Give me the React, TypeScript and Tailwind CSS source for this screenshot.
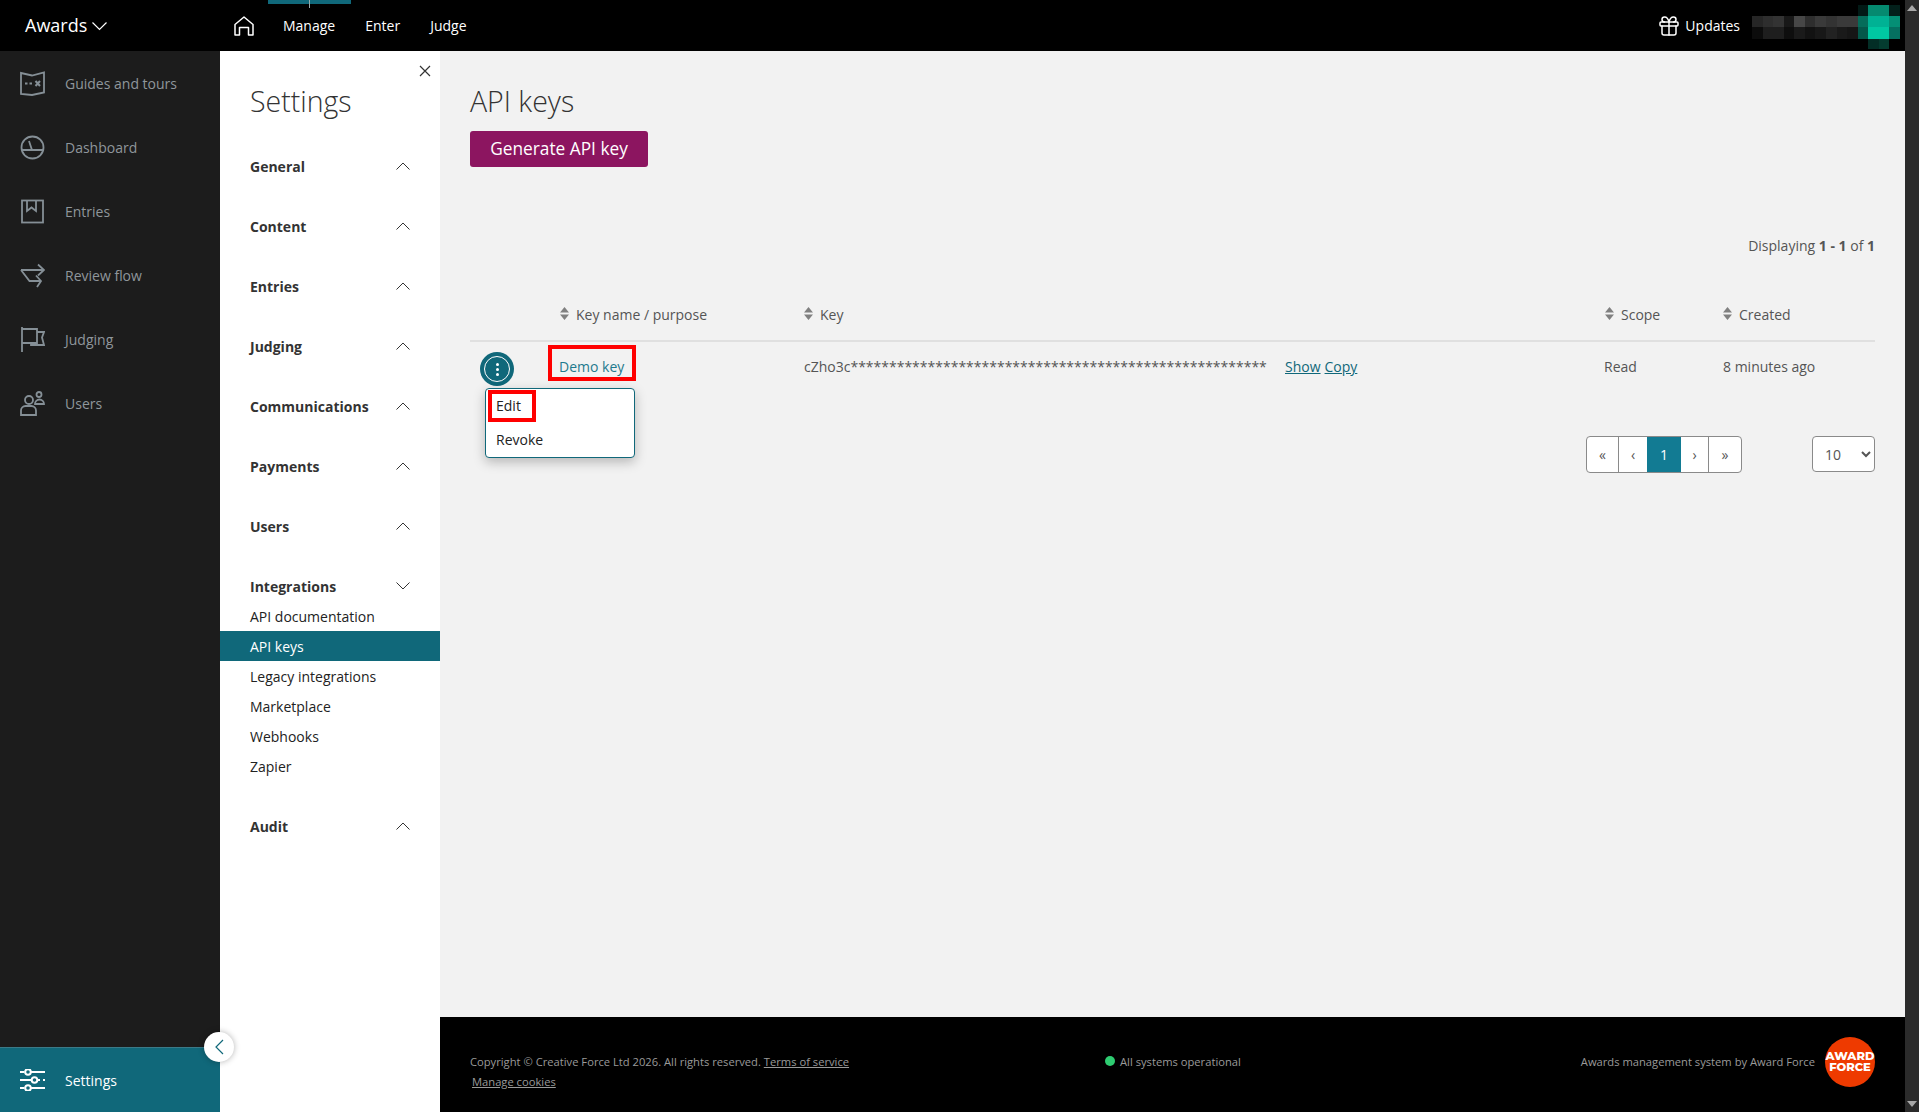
import { Gift } from 'lucide-react';

const sideLinks = [
	{ label: 'Guides and tours', icon: 'guides' },
	{ label: 'Dashboard', icon: 'dashboard' },
	{ label: 'Entries', icon: 'entries' },
	{ label: 'Review flow', icon: 'review' },
	{ label: 'Judging', icon: 'judging' },
	{ label: 'Users', icon: 'users' },
];

const settingsBefore = ['General', 'Content', 'Entries', 'Judging', 'Communications', 'Payments', 'Users'];
const integrationLinks = ['API documentation', 'API keys', 'Legacy integrations', 'Marketplace', 'Webhooks', 'Zapier'];

// blurred account name in the top bar: [x, y, w, h, colour]
const mosaic: [number, number, number, number, string][] = [
	[106, 0, 10, 11, '#021a16'], [116, 0, 11, 11, '#058a70'], [127, 0, 10, 11, '#058a70'], [137, 0, 11, 11, '#03201b'],
	[0, 11, 11, 11, '#262626'], [11, 11, 10, 11, '#2e2e2e'], [21, 11, 11, 11, '#333333'],
	[32, 11, 10, 11, '#181818'], [42, 11, 11, 11, '#474747'], [53, 11, 10, 11, '#2e2e2e'], [63, 11, 11, 11, '#3a3a3a'],
	[74, 11, 11, 11, '#333333'], [85, 11, 10, 11, '#3a3a3a'], [95, 11, 11, 11, '#3a3a3a'],
	[106, 11, 10, 11, '#056d5a'], [116, 11, 11, 11, '#00b294'], [127, 11, 10, 11, '#00b294'], [137, 11, 11, 11, '#058f75'],
	[0, 22, 11, 12, '#0c0c0c'], [11, 22, 10, 12, '#1e1e1e'], [21, 22, 11, 12, '#1e1e1e'], [32, 22, 10, 12, '#0e0e0e'],
	[42, 22, 11, 12, '#1a1a1a'], [53, 22, 10, 12, '#121212'], [63, 22, 11, 12, '#181818'], [74, 22, 11, 12, '#222222'],
	[85, 22, 10, 12, '#1a1a1a'], [95, 22, 11, 12, '#161616'],
	[106, 22, 10, 12, '#04584a'], [116, 22, 11, 12, '#00c8a2'], [127, 22, 10, 12, '#00c8a2'], [137, 22, 11, 12, '#057060'],
	[116, 34, 11, 10, '#032e26'], [127, 34, 10, 10, '#043c30'],
];

function SideIcon({ name }: { name: string }) {
	return (
		<svg viewBox="0 0 25 25" fill="none" stroke="#858f96" strokeWidth="1.800" className="w-[25px] h-[25px] shrink-0">
			{name === 'guides' && (
				<>
					<path d="M1 2l11 2.500L24 1.500v20L12 24 1 23z" />
					<path d="M5 12.500h2.500M9.500 12.500H12" />
					<path d="M15.500 10l4.500 5m0-5l-4.500 5" strokeWidth="2" />
				</>
			)}
			{name === 'dashboard' && (
				<>
					<circle cx="12.500" cy="12.500" r="11" />
					<path d="M9 6l3 9h12M2 15h10" />
				</>
			)}
			{name === 'entries' && (
				<>
					<rect x="2" y="1.500" width="21" height="22" />
					<path d="M7 1.500V12l4.500-3.500L16 12V1.500" />
				</>
			)}
			{name === 'review' && (
				<>
					<path d="M1 7h23M18 1.500L24 7l-6 5.500" />
					<path d="M1 7l8.500 11H21M16 12.500l5 5.500-4 6" />
				</>
			)}
			{name === 'judging' && (
				<>
					<path d="M2 0v25" />
					<path d="M2 2h15v14H2" />
					<path d="M17 5h7l-2 5.500 2 7.500H11v-2" />
				</>
			)}
			{name === 'users' && (
				<>
					<circle cx="9" cy="9" r="4" />
					<path d="M1 24v-4.500A4.500 4.500 0 0 1 5.500 15h6a4.500 4.500 0 0 1 4.500 4.500V24z" />
					<circle cx="19" cy="3.500" r="2.500" />
					<path d="M15 13a4.500 4.500 0 0 1 9 0z" />
				</>
			)}
		</svg>
	);
}

function Chevron({ up = true }: { up?: boolean }) {
	return (
		<svg viewBox="0 0 14 8" fill="none" stroke="#333" strokeWidth="1" className="w-[14px] h-[8px]">
			<path d={up ? 'M0.500 7.500L7 1l6.500 6.500' : 'M0.500 0.500L7 7l6.500-6.500'} />
		</svg>
	);
}

function SortCarets() {
	return (
		<svg viewBox="0 0 9 13" fill="#808080" className="w-[9px] h-[13px] shrink-0 mb-[3px]">
			<path d="M4.500 0L9 5.500H0zM0 7.500h9L4.500 13z" />
		</svg>
	);
}

function SettingsHeading({ label, up = true }: { label: string; up?: boolean }) {
	return (
		<div className="h-[30px] pl-[30px] pr-[30px] flex items-center justify-between">
			<span className="text-[14px] font-bold text-[#333]">{label}</span>
			<Chevron up={up} />
		</div>
	);
}

function TopNav() {
	return (
		<header className="relative h-[51px] shrink-0 bg-black flex items-center text-white">
			<div className="absolute left-[268px] top-0 w-[83px] h-[4px] bg-[#10687a]" />
			<div className="absolute left-[309px] top-0 w-px h-[8px] bg-[#9aa]" />
			<div className="w-[220px] pl-[25px] flex items-center gap-[5px]">
				<span className="text-[18px]">Awards</span>
				<svg viewBox="0 0 15 9" fill="none" stroke="#fff" strokeWidth="1.200" className="w-[15px] h-[9px] mt-[2px]">
					<path d="M0.500 0.500L7.500 7.500l7-7" />
				</svg>
			</div>
			<svg viewBox="0 0 20 20" fill="none" stroke="#fff" strokeWidth="1.500" className="w-[20px] h-[20px] ml-[14px]">
				<path d="M1 19V8.500L10 1l9 7.500V19h-4.500v-7.500h-9V19z" strokeLinejoin="round" />
			</svg>
			<nav className="flex items-center gap-[30px] ml-[29px] text-[14px]">
				<span>Manage</span>
				<span>Enter</span>
				<span>Judge</span>
			</nav>
			<div className="ml-auto flex items-center text-[14px]">
				<Gift className="w-[24px] h-[24px]" strokeWidth={1.500} />
				<span className="ml-[4px]">Updates</span>
				<svg width="148" height="44" className="ml-[12px] mr-[5px] mt-[3px]">
					{mosaic.map(([x, y, w, h, c], i) => (
						<rect key={i} x={x} y={y} width={w} height={h} fill={c} />
					))}
				</svg>
			</div>
		</header>
	);
}

function Sidebar() {
	return (
		<aside className="relative z-10 w-[220px] shrink-0 bg-[#1c1c1c] flex flex-col">
			<div className="flex-1">
				{sideLinks.map((l) => (
					<div key={l.label} className="h-[64px] pl-[20px] flex items-center gap-[20px] text-[14px] text-[#8f969b]">
						<SideIcon name={l.icon} />
						<span>{l.label}</span>
					</div>
				))}
			</div>
			<div className="h-[65px] bg-[#10687a] border-t border-[#3b7a88] pl-[20px] flex items-center gap-[20px] text-[14px] text-white">
				<svg viewBox="0 0 25 22" fill="none" stroke="#fff" strokeWidth="2" className="w-[25px] h-[22px] shrink-0">
					<path d="M0 3h4.500M11 3h14M0 11h11M17.500 11H20M23 11h2M0 19h4.500M11 19h14" />
					<circle cx="8" cy="3" r="2.800" />
					<circle cx="14.500" cy="11" r="2.800" />
					<circle cx="8" cy="19" r="2.800" />
				</svg>
				<span>Settings</span>
			</div>
			<button className="absolute left-[204px] bottom-[50px] w-[30px] h-[30px] rounded-full bg-white shadow-[0_0_6px_rgba(0,0,0,0.3)] flex items-center justify-center">
				<svg viewBox="0 0 9 16" fill="none" stroke="#10687a" strokeWidth="1.200" className="w-[9px] h-[16px]">
					<path d="M8 1L1 8l7 7" />
				</svg>
			</button>
		</aside>
	);
}

function SettingsPanel() {
	return (
		<div className="relative w-[220px] shrink-0 bg-white">
			<svg viewBox="0 0 12 12" fill="none" stroke="#333" strokeWidth="1.200" className="absolute left-[199px] top-[14px] w-[12px] h-[12px]">
				<path d="M1 1l10 10M11 1L1 11" />
			</svg>
			<h2 className="pl-[30px] pt-[29px] h-[100px] text-[28.500px] leading-[42px] font-light text-[#333]">Settings</h2>
			<div className="flex flex-col gap-[30px]">
				{settingsBefore.map((s) => (
					<SettingsHeading key={s} label={s} />
				))}
				<div>
					<SettingsHeading label="Integrations" up={false} />
					{integrationLinks.map((l) => (
						<div
							key={l}
							className={
								l === 'API keys'
									? 'h-[30px] pl-[30px] flex items-center text-[14px] bg-[#10687a] text-white'
									: 'h-[30px] pl-[30px] flex items-center text-[14px] text-[#222]'
							}
						>
							{l}
						</div>
					))}
				</div>
				<SettingsHeading label="Audit" />
			</div>
		</div>
	);
}

function HeaderCell({ label }: { label: string }) {
	return (
		<div className="flex items-center gap-[7px]">
			<SortCarets />
			<span>{label}</span>
		</div>
	);
}

function ApiKeysTable() {
	return (
		<div>
			<div className="grid grid-cols-[90px_244px_800px_119px_1fr] h-[55px] pt-[2px] items-center border-b-2 border-[#e0e0e0] text-[14px] text-[#555]">
				<div />
				<HeaderCell label="Key name / purpose" />
				<HeaderCell label="Key" />
				<div className="ml-px">
					<HeaderCell label="Scope" />
				</div>
				<HeaderCell label="Created" />
			</div>
			<div className="relative grid grid-cols-[90px_244px_800px_119px_1fr] h-[94px] text-[14px] text-[#555]">
				<div>
					<div className="ml-[10px] mt-[10px] w-[34px] h-[34px] rounded-full bg-[#10687a] flex items-center justify-center">
						<div className="w-[26px] h-[26px] rounded-full border border-white flex flex-col items-center justify-center gap-[2px]">
							<span className="w-[3px] h-[3px] rounded-full bg-white" />
							<span className="w-[3px] h-[3px] rounded-full bg-white" />
							<span className="w-[3px] h-[3px] rounded-full bg-white" />
						</div>
					</div>
				</div>
				<div>
					<span className="block ml-[-12px] mt-[3px] w-[88px] h-[36px] pl-[7px] border-4 border-[#f00] leading-[36px] text-[#1f7a8e]">Demo key</span>
				</div>
				<div className="pt-[14px] flex">
					<span className="w-[481px]">cZho3c******************************************************</span>
					<a className="underline text-[#10687a]">Show</a>
					<a className="underline text-[#10687a] ml-[4px]">Copy</a>
				</div>
				<div className="pt-[14px]">Read</div>
				<div className="pt-[14px]">8 minutes ago</div>
				<div className="absolute left-[15px] top-[46px] w-[150px] h-[70px] bg-white border border-[#10687a] rounded-[4px] shadow-[0_4px_12px_rgba(0,0,0,0.25)] text-[14px] text-[#222]">
					<div className="ml-[2px] mt-[1px] w-[48px] h-[32px] border-4 border-[#f00] pl-[4px] leading-[24px]">Edit</div>
					<div className="pl-[10px] mt-[8px] leading-[20px]">Revoke</div>
				</div>
			</div>
		</div>
	);
}

function Pagination() {
	const cellBase = 'h-[35px] flex items-center justify-center text-[14px]';
	return (
		<div className="flex justify-end items-start">
			<div className="flex bg-white border border-[#8a8a8a] rounded-[4px] overflow-hidden text-[#555]">
				<span className={`${cellBase} w-[32px] border-r border-[#8a8a8a]`}>«</span>
				<span className={`${cellBase} w-[28px]`}>‹</span>
				<span className={`${cellBase} w-[34px] bg-[#127b93] text-white`}>1</span>
				<span className={`${cellBase} w-[28px] border-r border-[#8a8a8a]`}>›</span>
				<span className={`${cellBase} w-[32px]`}>»</span>
			</div>
			<select defaultValue="10" className="ml-[70px] w-[63px] h-[36px] bg-white border border-[#8a8a8a] rounded-[4px] pl-[8px] text-[14px] text-[#555]">
				<option>10</option>
				<option>25</option>
				<option>50</option>
			</select>
		</div>
	);
}

function Footer() {
	return (
		<footer className="h-[95px] shrink-0 bg-black flex items-center justify-between pl-[30px] pr-[30px] text-[11.200px] text-[#9a9a9a]">
			<div className="w-[635px] self-start pt-[35px] leading-[20px]">
				<div>
					Copyright © Creative Force Ltd 2026. All rights reserved. <a className="underline">Terms of service</a>
				</div>
				<a className="underline ml-[2px]">Manage cookies</a>
			</div>
			<div className="flex-1 flex items-center gap-[5px] mb-[5px]">
				<span className="w-[10px] h-[10px] rounded-full bg-[#2ecc71] mb-[2px]" />
				<span>All systems operational</span>
			</div>
			<div className="flex items-center gap-[10px] mb-[5px]">
				<span>Awards management system by Award Force</span>
				<div className="w-[50px] h-[50px] rounded-full bg-[#ee3a00] flex flex-col items-center justify-center text-white font-['Montserrat','Inter',sans-serif] font-extrabold text-[11.500px] leading-[11px]">
					<span>AWARD</span>
					<span>FORCE</span>
				</div>
			</div>
		</footer>
	);
}

export default function App() {
	return (
		<div className="flex h-[1112px] overflow-hidden bg-black font-['Open_Sans',sans-serif]">
			<div className="flex-1 min-w-0 flex flex-col">
				<TopNav />
				<div className="flex-1 min-h-0 flex">
					<Sidebar />
					<SettingsPanel />
					<div className="flex-1 min-w-0 flex flex-col">
						<main className="flex-1 bg-[#f2f2f2] pl-[30px] pr-[30px]">
							<h1 className="pt-[29px] h-[80px] text-[28.500px] leading-[42px] font-light text-[#333]">API keys</h1>
							<button className="block w-[178px] h-[36px] rounded-[3px] bg-[#8c1560] text-white text-[17.300px]">Generate API key</button>
							<div className="mt-[69px] text-right text-[14px] leading-[20px] text-[#555]">
								Displaying <b>1 - 1</b> of <b>1</b>
							</div>
							<div className="mt-[31px]">
								<ApiKeysTable />
							</div>
							<Pagination />
						</main>
						<Footer />
					</div>
				</div>
			</div>
			<div className="w-[14px] shrink-0 bg-[#2b2b2b] flex flex-col items-center justify-between py-[5px]">
				<svg viewBox="0 0 10 6" fill="#a8a8a8" className="w-[10px] h-[6px]">
					<path d="M5 0l5 6H0z" />
				</svg>
				<svg viewBox="0 0 10 6" fill="#a8a8a8" className="w-[10px] h-[6px]">
					<path d="M0 0h10L5 6z" />
				</svg>
			</div>
		</div>
	);
}
